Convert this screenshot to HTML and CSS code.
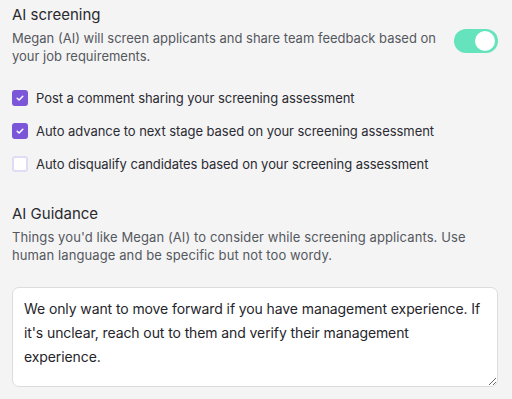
FILE: index.html
```html
<!DOCTYPE html>
<html lang="en">
<head>
    <meta charset="UTF-8">
    <meta name="viewport" content="width=device-width, initial-scale=1.0">
    <title>AI screening</title>
    <link rel="stylesheet" href="styles.css">
</head>
<body>

    <!-- Seccion de screening -->
    <div class="section">
        <div class="section-header">
            <div class="section-text">
                <h2 class="title">AI screening</h2>
                <p class="desc">Megan (AI) will screen applicants and share team feedback based on your job requirements.</p>
            </div>
            <div class="toggle on">
                <div class="knob"></div>
            </div>
        </div>

        <div class="options">
            <label class="option">
                <span class="check checked">
                    <svg width="10" height="10" viewBox="0 0 10 10"><path d="M2.2 5.2 L4.1 7 L7.8 3.2" fill="none" stroke="#fff" stroke-width="1.5" stroke-linecap="round" stroke-linejoin="round"/></svg>
                </span>
                Post a comment sharing your screening assessment
            </label>
            <label class="option">
                <span class="check checked">
                    <svg width="10" height="10" viewBox="0 0 10 10"><path d="M2.2 5.2 L4.1 7 L7.8 3.2" fill="none" stroke="#fff" stroke-width="1.5" stroke-linecap="round" stroke-linejoin="round"/></svg>
                </span>
                Auto advance to next stage based on your screening assessment
            </label>
            <label class="option">
                <span class="check"></span>
                Auto disqualify candidates based on your screening assessment
            </label>
        </div>
    </div>

    <!-- Guia de AI -->
    <div class="section guidance">
        <h2 class="title">AI Guidance</h2>
        <p class="desc">Things you'd like Megan (AI) to consider while screening applicants. Use human language and be specific but not too wordy.</p>
        <textarea class="guidance-box">We only want to move forward if you have management experience. If it's unclear, reach out to them and verify their management experience.</textarea>
    </div>

</body>
</html>
```

FILE: styles.css
```css
/* Estilos generales */
* {
    box-sizing: border-box;
}

body {
    font-family: Inter, "Noto Sans", sans-serif;
    margin: 0;
    padding: 5px 14px 0 12px;
    background-color: #f4f4f4;
    color: #2b2b30;
}

.title {
    font-size: 15px;
    font-weight: 400;
    line-height: 20px;
    margin: 0;
    color: #2a2a2e;
}

.desc {
    font-size: 13px;
    line-height: 18px;
    margin: 4px 0 0;
    color: #55585e;
}

.guidance .desc {
    letter-spacing: 0.1px;
}

.section-header {
    display: flex;
    justify-content: space-between;
    align-items: flex-start;
}

.section-text {
    width: 432px;
}

.toggle {
    width: 44px;
    height: 24px;
    border-radius: 12px;
    background-color: #64e3bd;
    margin-top: 24px;
    padding: 2px 3px;
    display: flex;
    justify-content: flex-end;
}

.knob {
    width: 20px;
    height: 20px;
    border-radius: 50%;
    background-color: #fff;
}

.options {
    display: flex;
    flex-direction: column;
    gap: 17px;
    margin-top: 25px;
}

.option {
    display: flex;
    align-items: center;
    gap: 8px;
    font-size: 13px;
    line-height: 16px;
    color: #2b2b33;
    letter-spacing: -0.05px;
}

.check {
    width: 16px;
    height: 16px;
    border-radius: 3px;
    border: 2px solid #e2dbf6;
    background-color: #fff;
    display: flex;
    align-items: center;
    justify-content: center;
    flex-shrink: 0;
}

.check.checked {
    background-color: #7c56d8;
    border-color: #7c56d8;
}

.guidance {
    margin-top: 32px;
}

.guidance-box {
    display: block;
    width: 486px;
    height: 100px;
    margin-top: 23px;
    padding: 9px 11px;
    border: 1px solid #dcdcdc;
    border-radius: 7px;
    background-color: #fff;
    font-family: Inter, "Noto Sans", sans-serif;
    font-size: 14px;
    line-height: 24px;
    color: #25252b;
    letter-spacing: -0.1px;
    resize: vertical;
}
```
